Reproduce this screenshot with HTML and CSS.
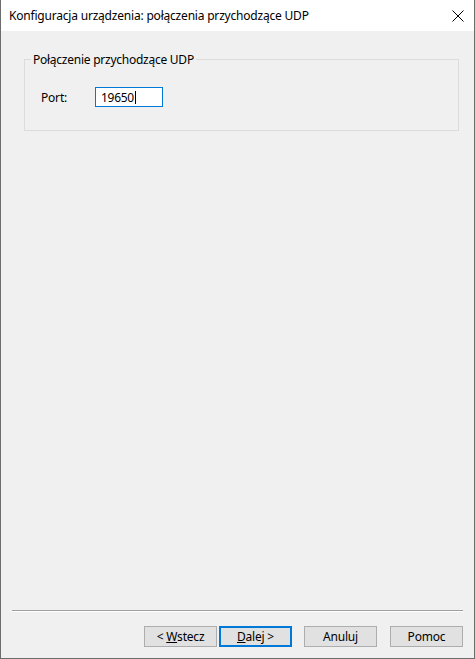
FILE: index.html
```html
<!DOCTYPE html>
<html lang="pl">
<head>
<meta charset="utf-8">
<title>Konfiguracja urządzenia</title>
<link rel="stylesheet" href="styles.css">
</head>
<body>
<div class="window">
  <div class="titlebar">
    <span class="title">Konfiguracja urządzenia: połączenia przychodzące UDP</span>
    <svg class="close" width="12" height="12" viewBox="0 0 12 12"><path d="M0.5 0.5 L11.5 11.5 M11.5 0.5 L0.5 11.5" stroke="#000" stroke-width="1" fill="none"/></svg>
  </div>
  <div class="content">
    <fieldset class="group">
      <legend class="legend">Połączenie przychodzące UDP</legend>
      <div class="row">
        <span class="label">Port:</span>
        <div class="input"><span>19650</span><span class="caret"></span></div>
      </div>
    </fieldset>
  </div>
  <div class="footer">
    <div class="sep"></div>
    <div class="buttons">
      <div class="btn"><span>&lt;&nbsp;<u>W</u>stecz</span></div>
      <div class="btn default"><span><u>D</u>alej&nbsp;&gt;</span></div>
      <div class="btn gap"><span>Anuluj</span></div>
      <div class="btn gap2"><span>Pomoc</span></div>
    </div>
  </div>
</div>
</body>
</html>
```
FILE: styles.css
```css
html, body {
  margin: 0;
  padding: 0;
  background: #f0f0f0;
}
.window {
  width: 475px;
  height: 659px;
  box-sizing: border-box;
  border: 1px solid #6d6d6d;
  border-top: none;
  display: flex;
  flex-direction: column;
  background: #f0f0f0;
  font-family: "Noto Sans", "Open Sans", sans-serif;
  font-size: 12px;
  color: #000;
}
.titlebar {
  height: 31px;
  background: #fff;
  display: flex;
  align-items: center;
  padding-left: 8px;
  padding-right: 10px;
  flex-shrink: 0;
}
.title {
  flex: 1;
  font-size: 12px;
  letter-spacing: -0.2px;
  margin-top: -1px;
}
.close {
  display: block;
  margin-top: 1px;
}
.content {
  flex: 1;
  padding: 20px 15px 0 23px;
}
.group {
  margin: 0;
  border: 1px solid #dcdcdc;
  padding: 0 0 0 16px;
  height: 80px;
  box-sizing: border-box;
}
.legend {
  padding: 0 2px;
  margin-left: -10px;
  font-size: 12px;
  letter-spacing: -0.25px;
}
.row {
  display: flex;
  align-items: center;
  margin-top: 19px;
}
.label {
  width: 54px;
  letter-spacing: -0.2px;
}
.input {
  width: 68px;
  height: 20px;
  box-sizing: border-box;
  border: 1px solid #0078d7;
  background: #fff;
  display: flex;
  align-items: center;
  padding-left: 5px;
  letter-spacing: -0.3px;
}
.caret {
  display: inline-block;
  width: 1px;
  height: 13px;
  background: #000;
  margin-left: 1px;
}
.footer {
  padding: 0 11px 11px 11px;
}
.sep {
  height: 1px;
  background: #a0a0a0;
  border-bottom: 1px solid #fff;
  margin-bottom: 14px;
}
.buttons {
  display: flex;
  justify-content: flex-end;
}
.btn {
  width: 73px;
  height: 21px;
  box-sizing: border-box;
  border: 1px solid #adadad;
  background: #e1e1e1;
  display: flex;
  align-items: center;
  justify-content: center;
  letter-spacing: -0.2px;
}
.btn.default {
  border: 2px solid #0078d7;
  margin-left: 2px;
}
.btn.gap {
  margin-left: 12px;
}
.btn.gap2 {
  margin-left: 13px;
}
```
